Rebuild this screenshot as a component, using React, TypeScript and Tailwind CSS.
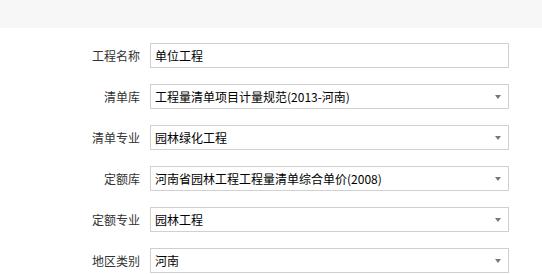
const rows: { label: string; value: string; select: boolean }[] = [
  { label: "工程名称", value: "单位工程", select: false },
  { label: "清单库", value: "工程量清单项目计量规范(2013-河南)", select: true },
  { label: "清单专业", value: "园林绿化工程", select: true },
  { label: "定额库", value: "河南省园林工程工程量清单综合单价(2008)", select: true },
  { label: "定额专业", value: "园林工程", select: true },
  { label: "地区类别", value: "河南", select: true },
];

export default function App() {
  return (
    <div
      className="w-[542px] h-[274px] bg-white overflow-hidden text-[12px]"
      style={{ fontFamily: '"Noto Sans CJK SC", "Noto Sans", sans-serif' }}
    >
      <div className="h-[28px] bg-[#f7f7f7]" />
      <div className="flex flex-col gap-[16px] pt-[15px]">
        {rows.map((row) => (
          <div key={row.label} className="flex items-center">
            <div className="w-[140px] text-right text-[#333]">{row.label}</div>
            <div className="ml-[10px] w-[359px] h-[25px] border border-[#d0d0d0] bg-white flex items-center pl-[4px] pr-[7px]">
              <span className="flex-1 text-black whitespace-nowrap">{row.value}</span>
              {row.select && (
                <span className="w-0 h-0 border-l-[3px] border-r-[3px] border-t-[4px] border-l-transparent border-r-transparent border-t-[#777]" />
              )}
            </div>
          </div>
        ))}
      </div>
    </div>
  );
}
